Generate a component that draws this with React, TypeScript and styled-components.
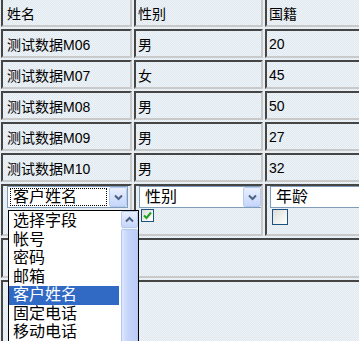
import React from 'react';
import styled, { createGlobalStyle } from 'styled-components';

const dither = `
  background-color: #e1e9f0;
  background-image: conic-gradient(#eef3f7 25%, transparent 0 50%, #eef3f7 0 75%, transparent 0);
  background-size: 2px 2px;
`;

const GlobalStyle = createGlobalStyle`
  html, body {
    margin: 0;
    padding: 0;
    overflow: hidden;
    ${dither}
  }
`;

const Page = styled.div`
  position: relative;
  width: 359px;
  height: 341px;
  overflow: hidden;
  font-family: "Liberation Sans", "Noto Sans CJK SC", sans-serif;
`;

const Grid = styled.table`
  border-collapse: separate;
  border-spacing: 2px;
  margin: -4px 0 0 -1px;
  table-layout: fixed;
  width: 398px;
`;

const Col = styled.col<{ $w: number }>`
  width: ${p => p.$w}px;
`;

const Cell = styled.td<{ $h?: number; $top?: boolean }>`
  height: ${p => p.$h ?? 25}px;
  padding: 0 2px;
  border-top: 2px solid #454545;
  border-left: 2px solid #454545;
  border-right: 2px solid #c9c9c9;
  border-bottom: 2px solid #c9c9c9;
  font-size: 14px;
  color: #000;
  white-space: nowrap;
  overflow: hidden;
  vertical-align: ${p => (p.$top ? 'top' : 'middle')};
  ${dither}

  &:first-child {
    padding-left: 4px;
  }
`;

const SelectBox = styled.div<{ $w: number }>`
  display: flex;
  align-items: center;
  box-sizing: border-box;
  width: ${p => p.$w}px;
  height: 22px;
  margin-left: ${p => (p.$w > 121 ? 1 : 0)}px;
  border: 1px solid #7f9db9;
  background: #fff;
  font-size: 16px;
`;

const SelectValue = styled.div<{ $focused?: boolean }>`
  flex: 1;
  height: 16px;
  margin: 0 2px;
  padding-left: 2px;
  line-height: 16px;
  border: 1px ${p => (p.$focused ? 'dotted #000' : 'solid transparent')};
  overflow: hidden;
`;

const ArrowButton = styled.div`
  display: flex;
  align-items: center;
  justify-content: center;
  box-sizing: border-box;
  width: 18px;
  height: 20px;
  margin-right: 0;
  border: 1px solid #b6c9ef;
  border-radius: 2px;
  background: linear-gradient(#e8effd, #c6d6fb);
`;

const CheckRow = styled.div`
  display: flex;
  padding: 1px 0 0 3px;
`;

const CheckBox = styled.span<{ $size: number }>`
  display: flex;
  align-items: center;
  justify-content: center;
  box-sizing: border-box;
  width: ${p => p.$size}px;
  height: ${p => p.$size}px;
  border: 1px solid #1c5180;
  background: linear-gradient(135deg, #dcdcd7, #fff);
`;

const List = styled.div`
  position: absolute;
  left: 8px;
  top: 210px;
  width: 131px;
  height: 150px;
  box-sizing: border-box;
  border: 1px solid #000;
  background: #fff;
  display: flex;
`;

const Items = styled.div`
  flex: 1;
  padding-top: 1px;
`;

const Item = styled.div<{ $selected?: boolean }>`
  height: 18.5px;
  line-height: 18.5px;
  padding-left: 4px;
  font-size: 16px;
  color: ${p => (p.$selected ? '#fff' : '#000')};
  background: ${p => (p.$selected ? '#316ac5' : 'transparent')};
  margin-right: 2px;
  white-space: nowrap;
`;

const ScrollBar = styled.div`
  width: 17px;
  display: flex;
  flex-direction: column;
  gap: 1px;
  background: #f3f5fb;
`;

const ScrollButton = styled(ArrowButton)`
  height: 17px;
  width: 17px;
`;

const Thumb = styled.div`
  flex: 1;
  border: 1px solid #b3c7f2;
  border-radius: 2px;
  background: linear-gradient(90deg, #dde7fd, #c4d4fa 40%, #bccdf6);
`;

const Chevron = ({ up }: { up?: boolean }) => (
  <svg width="9" height="7" viewBox="0 0 9 7">
    <path
      d={up ? 'M1 5.5 L4.5 2 L8 5.5' : 'M1 1.5 L4.5 5 L8 1.5'}
      fill="none"
      stroke="#4d6185"
      strokeWidth="2"
    />
  </svg>
);

const Check = () => (
  <svg width="9" height="9" viewBox="0 0 9 9">
    <path d="M1 4.5 L3.5 7 L8 1.5" fill="none" stroke="#21a121" strokeWidth="2" />
  </svg>
);

const rows = [
  ['测试数据M06', '男', '20'],
  ['测试数据M07', '女', '45'],
  ['测试数据M08', '男', '50'],
  ['测试数据M09', '男', '27'],
  ['测试数据M10', '男', '32'],
];

const fields = ['选择字段', '帐号', '密码', '邮箱', '客户姓名', '固定电话', '移动电话'];

const App = () => {
  return (
    <Page>
      <GlobalStyle />
      <Grid>
        <colgroup>
          <Col $w={131} />
          <Col $w={129} />
          <Col $w={130} />
        </colgroup>
        <tbody>
          <tr>
            <Cell>姓名</Cell>
            <Cell>性别</Cell>
            <Cell>国籍</Cell>
          </tr>
          {rows.map(r => (
            <tr key={r[0]}>
              <Cell>{r[0]}</Cell>
              <Cell>{r[1]}</Cell>
              <Cell>{r[2]}</Cell>
            </tr>
          ))}
          <tr>
            <Cell $h={48} $top>
              <SelectBox $w={121}>
                <SelectValue $focused>客户姓名</SelectValue>
                <ArrowButton><Chevron /></ArrowButton>
              </SelectBox>
            </Cell>
            <Cell $h={48} $top>
              <SelectBox $w={123}>
                <SelectValue>性别</SelectValue>
                <ArrowButton><Chevron /></ArrowButton>
              </SelectBox>
              <CheckRow>
                <CheckBox $size={13}><Check /></CheckBox>
              </CheckRow>
            </Cell>
            <Cell $h={48} $top>
              <SelectBox $w={123}>
                <SelectValue>年龄</SelectValue>
                <ArrowButton><Chevron /></ArrowButton>
              </SelectBox>
              <CheckRow>
                <CheckBox $size={16} />
              </CheckRow>
            </Cell>
          </tr>
          <tr>
            <Cell colSpan={3} $h={36} />
          </tr>
          <tr>
            <Cell colSpan={3} $h={80} />
          </tr>
        </tbody>
      </Grid>
      <List>
        <Items>
          {fields.map(f => (
            <Item key={f} $selected={f === '客户姓名'}>{f}</Item>
          ))}
        </Items>
        <ScrollBar>
          <ScrollButton><Chevron up /></ScrollButton>
          <Thumb />
        </ScrollBar>
      </List>
    </Page>
  );
};

export default App;
